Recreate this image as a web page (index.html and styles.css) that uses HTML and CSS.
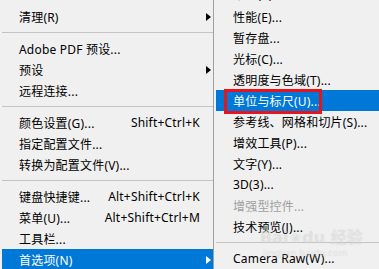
FILE: index.html
```html
<!DOCTYPE html>
<html lang="zh-CN">
<head>
    <meta charset="UTF-8">
    <meta name="viewport" content="width=device-width, initial-scale=1.0">
    <title>首选项菜单</title>
    <link rel="stylesheet" href="styles.css">
</head>
<body>
    <div class="screen">
        <div class="menu main">
            <div class="item"><span>清理(R)</span><span class="arrow"></span></div>
            <div class="sep"></div>
            <div class="item"><span>Adobe PDF 预设...</span></div>
            <div class="item"><span>预设</span><span class="arrow"></span></div>
            <div class="item"><span>远程连接...</span></div>
            <div class="sep"></div>
            <div class="item"><span>颜色设置(G)...</span><span class="key">Shift+Ctrl+K</span></div>
            <div class="item"><span>指定配置文件...</span></div>
            <div class="item"><span>转换为配置文件(V)...</span></div>
            <div class="sep"></div>
            <div class="item"><span>键盘快捷键...</span><span class="key">Alt+Shift+Ctrl+K</span></div>
            <div class="item"><span>菜单(U)...</span><span class="key">Alt+Shift+Ctrl+M</span></div>
            <div class="item"><span>工具栏...</span></div>
            <div class="item active"><span>首选项(N)</span><span class="arrow"></span></div>
        </div>
        <div class="menu sub">
            <div class="item cut"><span>常规(K)...</span></div>
            <div class="item"><span>性能(E)...</span></div>
            <div class="item"><span>暂存盘...</span></div>
            <div class="item"><span>光标(C)...</span></div>
            <div class="item"><span>透明度与色域(T)...</span></div>
            <div class="item active marked"><span>单位与标尺(U)...</span></div>
            <div class="item"><span>参考线、网格和切片(S)...</span></div>
            <div class="item"><span>增效工具(P)...</span></div>
            <div class="item"><span>文字(Y)...</span></div>
            <div class="item"><span>3D(3)...</span></div>
            <div class="item disabled"><span>增强型控件...</span></div>
            <div class="item"><span>技术预览(J)...</span></div>
            <div class="sep"></div>
            <div class="item"><span>Camera Raw(W)...</span></div>
        </div>
        <div class="watermark">
            <span class="wm-logo">Bai<span class="wm-paw">❀</span>du 经验</span>
            <span class="wm-url">jingyan.baidu.com</span>
        </div>
    </div>
</body>
</html>
```

FILE: styles.css
```css
body { margin: 0; background: #f0f0f0; font-family: "Noto Sans", "Noto Sans CJK SC", sans-serif; font-size: 12px; color: #000; }
.screen { position: relative; display: flex; width: 379px; height: 269px; overflow: hidden; background: #f0f0f0; }

.menu { display: flex; flex-direction: column; flex-shrink: 0; }
.main { width: 214px; padding-top: 6px; border-right: 1px solid #a0a0a0; box-sizing: border-box; }
.sub { flex: 1; }

.item { position: relative; display: flex; align-items: center; height: 21px; flex-shrink: 0; margin-left: 2px; padding: 0 2px 0 17px; white-space: nowrap; letter-spacing: 0.2px; }
.item.active { background: #0078d7; color: #fff; }
.item.disabled { color: #a0a0a0; }
.item.cut { height: 24px; margin-top: -18px; }

.key { margin-left: auto; margin-right: 11px; }
.arrow { margin-left: auto; width: 0; height: 0; border-left: 5px solid #000; border-top: 4px solid transparent; border-bottom: 4px solid transparent; }
.active .arrow { border-left-color: #fff; }

.sep { display: flex; align-items: center; height: 11px; flex-shrink: 0; margin-left: 2px; }
.sep::before { content: ""; flex: 1; height: 1px; background: #c4c4c4; }

.marked::after { content: ""; position: absolute; left: 8px; top: -1px; width: 98px; height: 25px; border: 3px solid #e5141f; box-sizing: border-box; }

.watermark { position: absolute; left: 260px; top: 228px; width: 100px; display: flex; flex-direction: column; color: rgba(255, 255, 255, 0.3); text-shadow: 0 0 1px rgba(160, 160, 160, 0.35); pointer-events: none; }
.wm-logo { font-family: "DejaVu Sans", "Noto Sans CJK SC", sans-serif; font-size: 16px; font-weight: bold; line-height: 20px; white-space: nowrap; }
.wm-paw { font-size: 14px; margin: 0 1px; }
.wm-url { font-size: 9px; line-height: 10px; padding-left: 3px; letter-spacing: 0.4px; white-space: nowrap; }
```
